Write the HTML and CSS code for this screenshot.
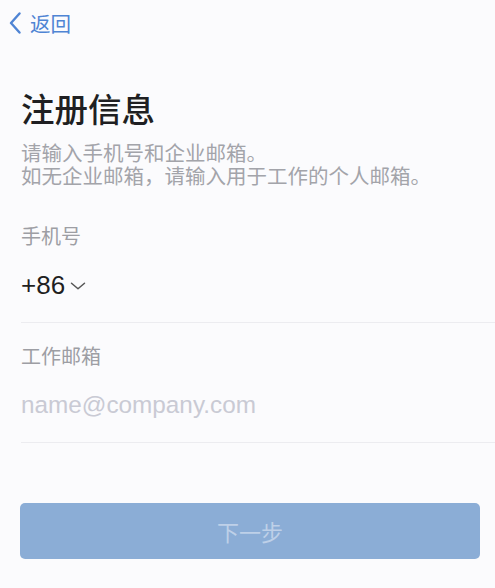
FILE: index.html
```html
<!DOCTYPE html>
<html lang="zh-CN">
<head>
<meta charset="utf-8">
<title>注册信息</title>
<link rel="stylesheet" href="styles.css">
</head>
<body>
<div class="nav">
  <a class="back">
    <svg class="back-icon" width="12" height="22" viewBox="0 0 12 22"><path d="M10.5 1.5 L2 11 L10.5 20.5" fill="none" stroke="#4f84d4" stroke-width="2.4" stroke-linecap="round" stroke-linejoin="round"/></svg>
    <span>返回</span>
  </a>
</div>
<main class="content">
  <h1 class="title">注册信息</h1>
  <p class="desc"><span class="desc-line">请输入手机号和企业邮箱。</span><span class="desc-line">如无企业邮箱，请输入用于工作的个人邮箱。</span></p>
  <div class="field">
    <div class="label">手机号</div>
    <div class="input-row">
      <span class="code">+86</span>
      <svg class="chev" width="16" height="8" viewBox="0 0 16 8"><path d="M1.5 1.2 L8 6.8 L14.5 1.2" fill="none" stroke="#555" stroke-width="1.5" stroke-linecap="round" stroke-linejoin="round"/></svg>
    </div>
  </div>
  <div class="field">
    <div class="label">工作邮箱</div>
    <div class="input-row">
      <span class="placeholder">name@company.com</span>
    </div>
  </div>
  <button class="next">下一步</button>
</main>
</body>
</html>
```

FILE: styles.css
```css
html, body {
  margin: 0;
  padding: 0;
  background: #fbfbfd;
  font-family: "Noto Sans CJK SC", "Noto Sans", sans-serif;
}
.nav {
  height: 46px;
  display: flex;
  align-items: center;
  padding-left: 9px;
}
.back {
  display: flex;
  align-items: center;
  gap: 9px;
  color: #4f84d4;
  font-size: 20.5px;
  line-height: 24px;
  text-decoration: none;
}
.back-icon {
  display: block;
  margin-bottom: 1px;
}
.content {
  padding-left: 21px;
}
.title {
  margin: 42px 0 0;
  font-size: 33.5px;
  line-height: 40px;
  font-weight: 500;
  color: #1f1f22;
}
.desc {
  margin: 13px 0 0;
  font-size: 20.5px;
  color: #a3a4aa;
}
.desc-line {
  display: block;
  line-height: 22.5px;
}
.field:first-of-type {
  margin-top: 38px;
}
.label {
  font-size: 20px;
  line-height: 24px;
  color: #9d9ea4;
}
.field + .field .label {
  margin-top: 21px;
}
.input-row {
  height: 74px;
  display: flex;
  align-items: center;
  border-bottom: 1px solid #ececf0;
  font-family: "Liberation Sans", "Noto Sans CJK SC", sans-serif;
}
.code {
  font-size: 26px;
  line-height: 26px;
  color: #1f1f22;
}
.chev {
  display: block;
  margin-left: 5px;
  margin-top: 2px;
}
.placeholder {
  font-size: 24.3px;
  line-height: 24px;
  color: #c9cad4;
}
.next {
  display: block;
  margin: 60px 0 0 -1px;
  width: 460px;
  height: 56px;
  border: none;
  border-radius: 5px;
  background: #8badd6;
  color: #bed0e8;
  font-family: "Noto Sans CJK SC", sans-serif;
  font-size: 22px;
}
```
